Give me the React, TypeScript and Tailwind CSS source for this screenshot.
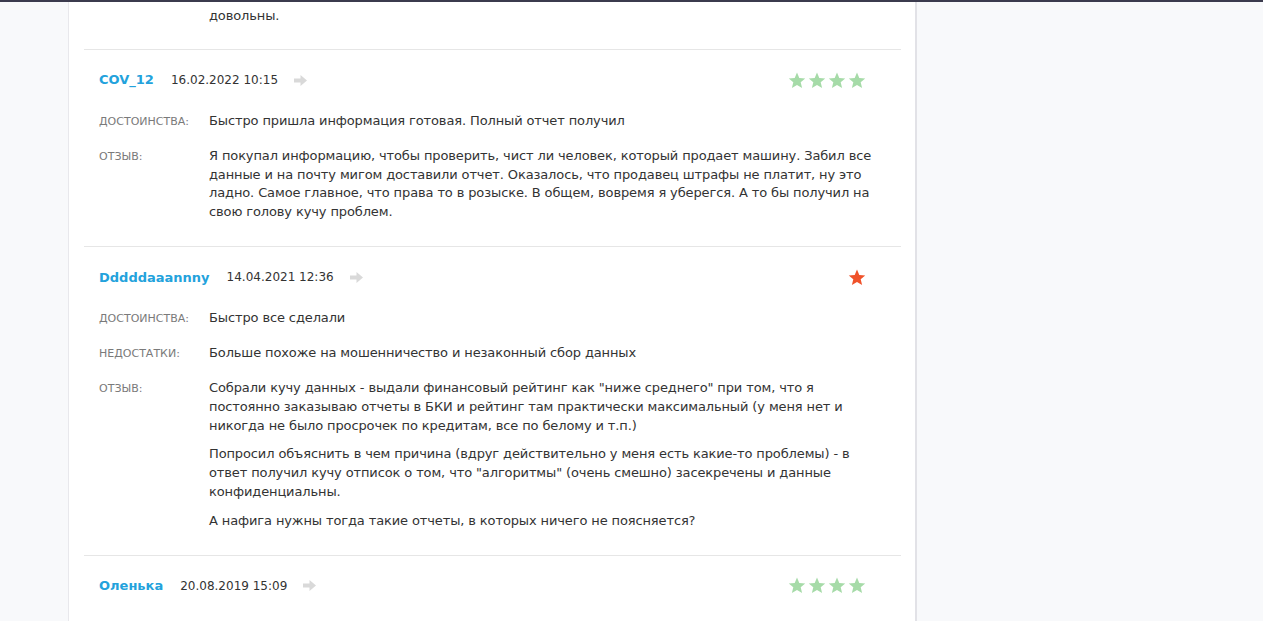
import React from "react";

const FONT = { fontFamily: '"DejaVu Sans", Verdana, sans-serif' };

function Star({ color }: { color: string }) {
  return (
    <svg width="18" height="17" viewBox="0 0 24 23" aria-hidden>
      <path
        d="M12 0.8l3.1 7.4 8 .6-6.1 5.2 1.9 7.8L12 17.6 5.1 21.8 7 14 0.9 8.8l8-.6z"
        fill={color}
      />
    </svg>
  );
}

function Arrow() {
  return (
    <svg width="13" height="11" viewBox="0 0 13 11" aria-hidden>
      <path d="M0 3.5h6.5V0L13 5.5 6.5 11V7.5H0z" fill="#d9d9d9" />
    </svg>
  );
}

type Row = { label: string; paras: string[] };
type Review = { name: string; date: string; stars: number; red?: boolean; rows: Row[] };

const reviews: Review[] = [
  {
    name: "COV_12",
    date: "16.02.2022 10:15",
    stars: 4,
    rows: [
      { label: "ДОСТОИНСТВА:", paras: ["Быстро пришла информация готовая. Полный отчет получил"] },
      {
        label: "ОТЗЫВ:",
        paras: [
          "Я покупал информацию, чтобы проверить, чист ли человек, который продает машину. Забил все данные и на почту мигом доставили отчет. Оказалось, что продавец штрафы не платит, ну это ладно. Самое главное, что права то в розыске. В общем, вовремя я уберегся. А то бы получил на свою голову кучу проблем.",
        ],
      },
    ],
  },
  {
    name: "Dddddaaannny",
    date: "14.04.2021 12:36",
    stars: 1,
    red: true,
    rows: [
      { label: "ДОСТОИНСТВА:", paras: ["Быстро все сделали"] },
      { label: "НЕДОСТАТКИ:", paras: ["Больше похоже на мошенничество и незаконный сбор данных"] },
      {
        label: "ОТЗЫВ:",
        paras: [
          'Собрали кучу данных - выдали финансовый рейтинг как "ниже среднего" при том, что я постоянно заказываю отчеты в БКИ и рейтинг там практически максимальный (у меня нет и никогда не было просрочек по кредитам, все по белому и т.п.)',
          'Попросил объяснить в чем причина (вдруг действительно у меня есть какие-то проблемы) - в ответ получил кучу отписок о том, что "алгоритмы" (очень смешно) засекречены и данные конфиденциальны.',
          "А нафига нужны тогда такие отчеты, в которых ничего не поясняется?",
        ],
      },
    ],
  },
  {
    name: "Оленька",
    date: "20.08.2019 15:09",
    stars: 4,
    rows: [],
  },
];

function ReviewItem({ r }: { r: Review }) {
  return (
    <div className="border-t border-[#e6e6e6] pt-[20px] pb-[24.5px] pl-[15px] pr-[35px]">
      <div className="flex items-center h-[20px]">
        <span className="text-[13px] font-bold text-[#23a2dc]">{r.name}</span>
        <span className="ml-[17px] text-[12px] text-[#333]">{r.date}</span>
        <span className="ml-[16px] flex items-center">
          <Arrow />
        </span>
        <div className="ml-auto flex items-center gap-[2px]">
          {Array.from({ length: r.stars }).map((_, i) => (
            <Star key={i} color={r.red ? "#f0522a" : "#a6dba8"} />
          ))}
        </div>
      </div>
      {r.rows.length > 0 && (
        <div className="mt-[22px] mr-[-20px] flex flex-col gap-[16px]">
          {r.rows.map((row, i) => (
            <div key={i} className="flex">
              <div className="w-[110px] shrink-0 text-[11px] leading-[19px] text-[#7a7a7a]">
                {row.label}
              </div>
              <div className="flex-1 flex flex-col gap-[10px] text-[13px] leading-[18.7px] tracking-[-0.12px] text-[#333]">
                {row.paras.map((p, j) => (
                  <p key={j}>{p}</p>
                ))}
              </div>
            </div>
          ))}
        </div>
      )}
    </div>
  );
}

export default function App() {
  return (
    <div
      className="min-h-screen h-[621px] overflow-hidden bg-[#f8f9fb] border-t-2 border-[#3b3b4e] flex"
      style={FONT}
    >
      <div className="w-[68px] shrink-0" />
      <div className="w-[849px] shrink-0 bg-white border-l border-[#e8e8ec] border-r-2 border-r-[#e2e2e7] pl-[15px] pr-[14px]">
        <div className="pt-[4px] pb-[24px] pl-[125px] text-[13px] leading-[19px] tracking-[-0.12px] text-[#333]">
          довольны.
        </div>
        {reviews.map((r, i) => (
          <ReviewItem key={i} r={r} />
        ))}
      </div>
      <div className="flex-1" />
    </div>
  );
}
